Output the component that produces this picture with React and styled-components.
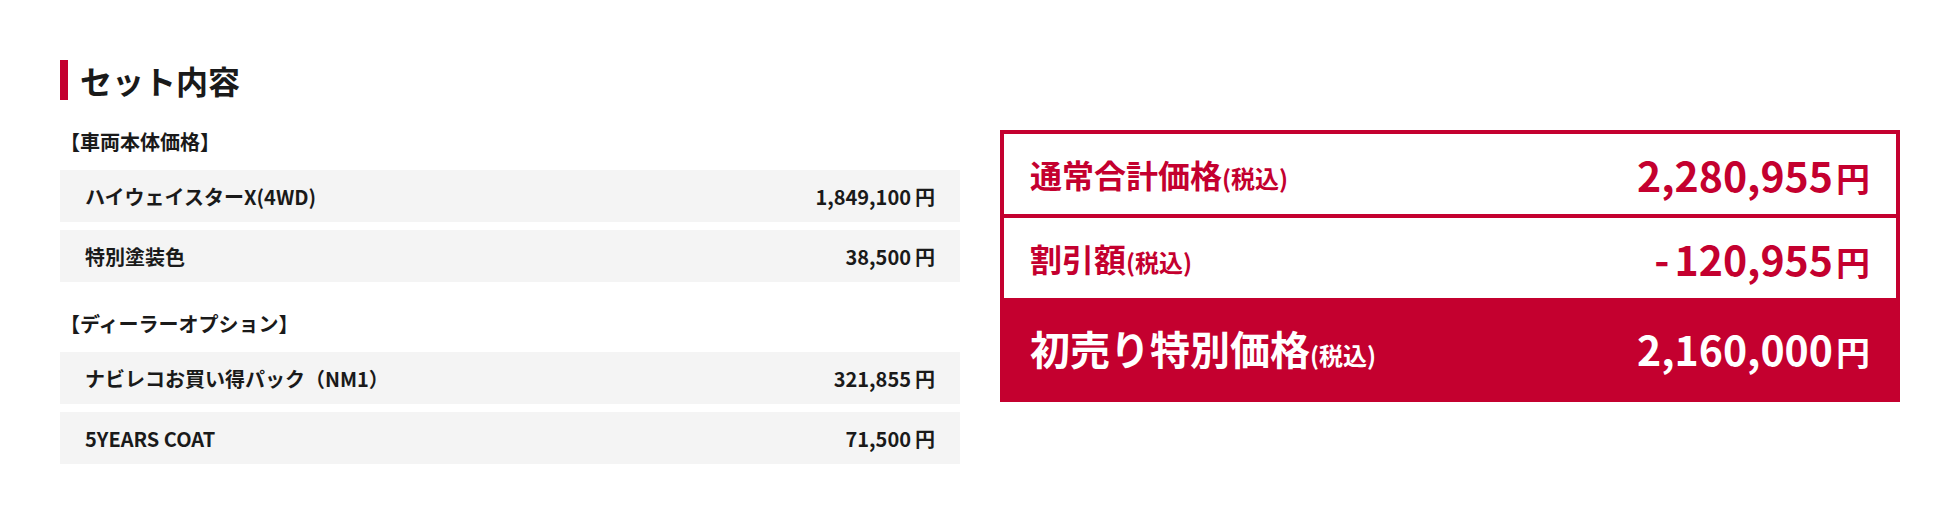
import React from 'react'
import styled, {createGlobalStyle} from 'styled-components'

const RED = '#c4002f'

const items = [
    {
        label: '【車両本体価格】',
        rows: [
            {name: 'ハイウェイスターX(4WD)', price: '1,849,100'},
            {name: '特別塗装色', price: '38,500'},
        ],
    },
    {
        label: '【ディーラーオプション】',
        rows: [
            {name: 'ナビレコお買い得パック（NM1）', price: '321,855'},
            {name: '5YEARS COAT', price: '71,500'},
        ],
    },
]

export default function App() {
    return (
        <>
            <GlobalStyle />
            <Page>
                <Heading>セット内容</Heading>
                <Columns>
                    <ItemList>
                        {items.map((group) => (
                            <Group key={group.label}>
                                <GroupLabel>{group.label}</GroupLabel>
                                {group.rows.map((row) => (
                                    <ItemRow key={row.name}>
                                        <span>{row.name}</span>
                                        <ItemPrice>
                                            {row.price}
                                            <Yen>円</Yen>
                                        </ItemPrice>
                                    </ItemRow>
                                ))}
                            </Group>
                        ))}
                    </ItemList>
                    <PriceBox>
                        <PriceRow>
                            <PriceLabel>
                                通常合計価格<Tax>(税込)</Tax>
                            </PriceLabel>
                            <Amount>
                                2,280,955<BigYen>円</BigYen>
                            </Amount>
                        </PriceRow>
                        <PriceRow>
                            <PriceLabel>
                                割引額<Tax>(税込)</Tax>
                            </PriceLabel>
                            <Amount>
                                <Sign>-</Sign>120,955<BigYen>円</BigYen>
                            </Amount>
                        </PriceRow>
                        <PriceRow $final>
                            <PriceLabel $final>
                                初売り特別価格<Tax>(税込)</Tax>
                            </PriceLabel>
                            <Amount>
                                2,160,000<BigYen>円</BigYen>
                            </Amount>
                        </PriceRow>
                    </PriceBox>
                </Columns>
            </Page>
        </>
    )
}

const GlobalStyle = createGlobalStyle`
    body{
        margin: 0;
        background: #fff;
        font-family: "Noto Sans CJK JP", "Noto Sans", sans-serif;
        color: #1a1a1a;
    }
`

const Page = styled.div`
    padding: 60px 60px 40px;
`

// heading with red bar
const Heading = styled.h2`
    margin: 0 0 28px;
    height: 40px;
    line-height: 40px;
    border-left: 8px solid ${RED};
    padding-left: 12px;
    font-size: 32px;
    font-weight: 700;
`

const Columns = styled.div`
    display: grid;
    grid-template-columns: 900px 900px;
    column-gap: 40px;
    align-items: start;
`

// left list
const ItemList = styled.div`
    display: flex;
    flex-direction: column;
    gap: 28px;
`

const Group = styled.div`
    display: flex;
    flex-direction: column;
    gap: 8px;
`

const GroupLabel = styled.div`
    font-size: 20px;
    font-weight: 700;
    line-height: 28px;
    margin-bottom: 6px;
`

const ItemRow = styled.div`
    display: flex;
    justify-content: space-between;
    align-items: center;
    height: 52px;
    padding: 0 25px;
    background: #f4f4f4;
    font-size: 20px;
    font-weight: 700;
`

const ItemPrice = styled.span`
    white-space: nowrap;
`

const Yen = styled.span`
    margin-left: 4px;
`

// right price box
const PriceBox = styled.div`
    margin-top: 2px;
    border: 4px solid ${RED};
`

const PriceRow = styled.div`
    display: flex;
    justify-content: space-between;
    align-items: center;
    height: ${(p) => (p.$final ? '100px' : '80px')};
    padding: 0 26px;
    color: ${(p) => (p.$final ? '#fff' : RED)};
    background: ${(p) => (p.$final ? RED : '#fff')};
    font-weight: 700;

    &:first-child{
        border-bottom: 4px solid ${RED};
    }
`

const PriceLabel = styled.div`
    font-size: ${(p) => (p.$final ? '40px' : '32px')};
    white-space: nowrap;
`

const Tax = styled.span`
    font-size: 24px;
`

const Amount = styled.div`
    font-size: 41px;
    white-space: nowrap;
`

const Sign = styled.span`
    margin-right: 5px;
`

const BigYen = styled.span`
    font-size: 34px;
    margin-left: 3px;
`
